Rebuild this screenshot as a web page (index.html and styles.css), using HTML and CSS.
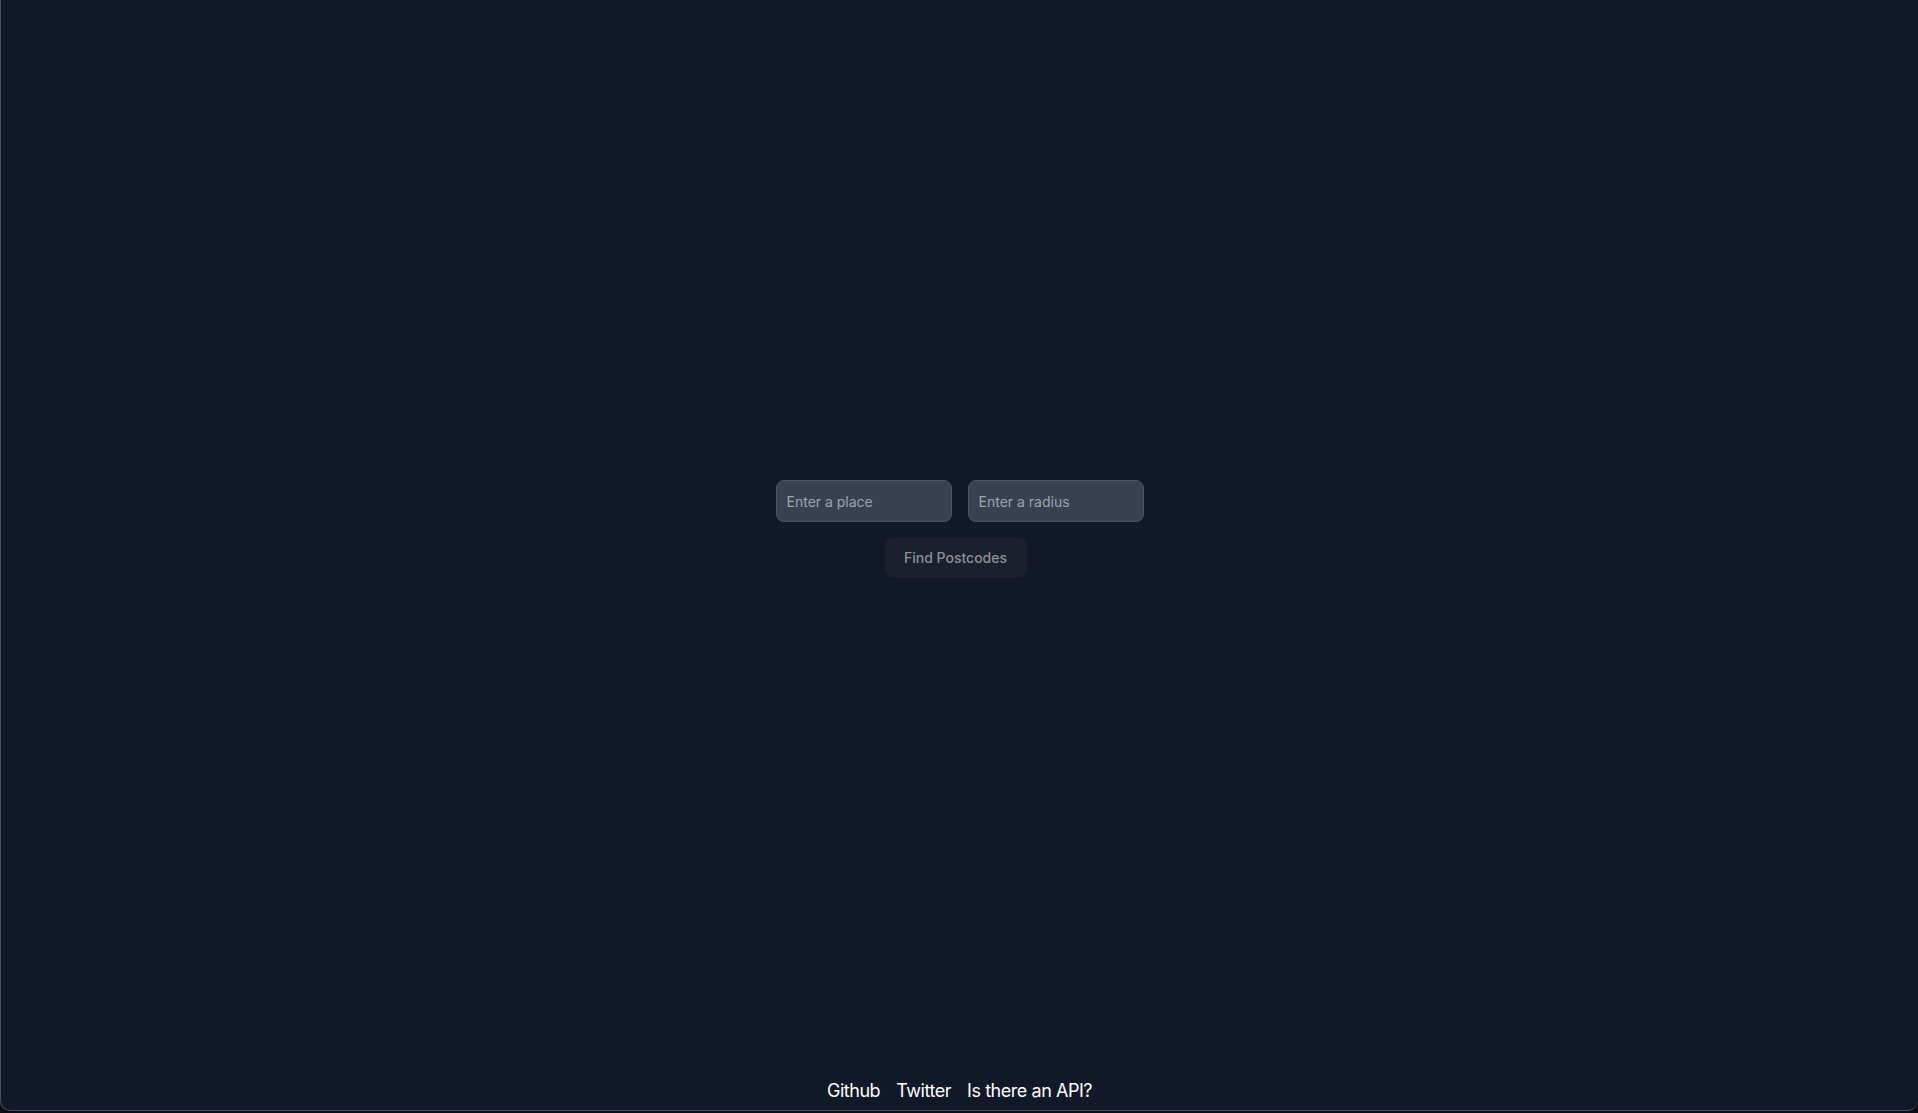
FILE: index.html
```html
<!DOCTYPE html>
<html lang="en">
<head>
<meta charset="utf-8">
<title>Postcodes</title>
<link rel="stylesheet" href="styles.css">
</head>
<body>
<div class="window">
  <main class="main">
    <form class="search">
      <div class="fields">
        <input class="field" type="text" placeholder="Enter a place">
        <input class="field" type="text" placeholder="Enter a radius">
      </div>
      <button class="btn" type="button">Find Postcodes</button>
    </form>
  </main>
  <footer class="footer">
    <a class="link" href="#">Github</a>
    <a class="link" href="#">Twitter</a>
    <a class="link" href="#">Is there an API?</a>
  </footer>
</div>
</body>
</html>
```
FILE: styles.css
```css
* { box-sizing: border-box; }
html, body {
  margin: 0;
  padding: 0;
  background: #0b0d12;
  font-family: Inter, "Noto Sans", "Liberation Sans", sans-serif;
}
.window {
  height: 1111px;
  background: #111827;
  border-left: 1px solid #4b5060;
  border-bottom: 1px solid #4b5060;
  border-bottom-left-radius: 10px;
  border-bottom-right-radius: 10px;
  display: flex;
  flex-direction: column;
  overflow: hidden;
}
.main {
  flex: 1;
  display: flex;
  align-items: center;
  justify-content: center;
}
.search {
  display: flex;
  flex-direction: column;
  align-items: center;
  gap: 16px;
}
.fields {
  display: flex;
  gap: 16px;
}
.field {
  width: 176px;
  height: 42px;
  padding: 10px;
  background: #374151;
  border: 1px solid #4b5563;
  border-radius: 8px;
  color: #fff;
  font-family: inherit;
  font-size: 14px;
  line-height: 20px;
  outline: none;
}
.field::placeholder { color: #9ca3af; }
.btn {
  width: 142px;
  height: 40px;
  margin-right: 8px;
  padding: 10px 0;
  background: #1b202c;
  border: none;
  border-radius: 8px;
  color: #8b909a;
  font-family: inherit;
  font-size: 14px;
  font-weight: 500;
  line-height: 20px;
}
.footer {
  height: 52px;
  padding-top: 19px;
  display: flex;
  justify-content: center;
  gap: 16px;
}
.link {
  color: #fff;
  text-decoration: none;
  font-size: 18px;
  line-height: 28px;
  letter-spacing: -0.45px;
}
```
